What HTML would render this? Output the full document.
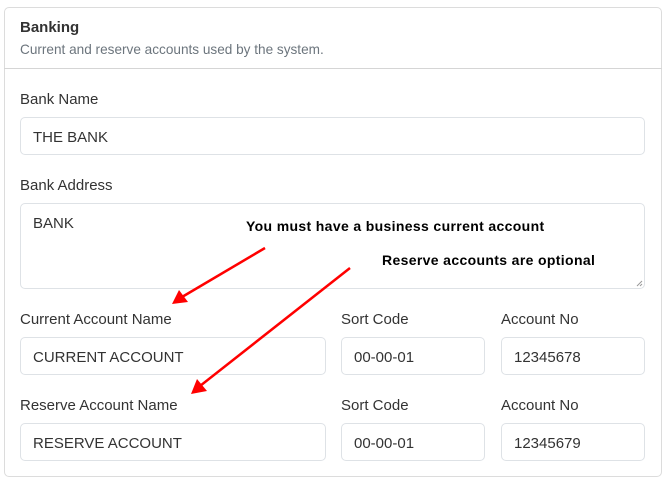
<!DOCTYPE html>
<html><head><style>
body{margin:0;width:667px;height:483px;background:#fff;font-family:"Liberation Sans",sans-serif;position:relative;overflow:hidden;color:#212529}
.card{position:absolute;left:4px;top:7px;width:656px;height:468px;border:1px solid #dcdcdc;border-radius:5px}
.hdr{position:absolute;left:4px;top:7px;width:658px;height:61px;border-bottom:1px solid #d5d5d5}
.t{position:absolute;white-space:nowrap}
.lbl{font-size:15px;color:#333}
.in{position:absolute;border:1px solid #dee2e6;border-radius:5px;box-sizing:border-box;font-size:15px;color:#333;padding-left:12px;line-height:40px}
.note{font-size:14px;font-weight:bold;color:#000;letter-spacing:0.35px}
</style></head><body>
<div class="card"></div><div class="hdr"></div>
<div class="t" style="left:20px;top:19px;font-size:15px;font-weight:600;color:#333">Banking</div>
<div class="t" style="left:20px;top:42px;font-size:13.6px;color:#6c757d">Current and reserve accounts used by the system.</div>
<div class="t lbl" style="left:20px;top:91px">Bank Name</div>
<div class="in" style="left:20px;top:117px;width:625px;height:38px">THE BANK</div>
<div class="t lbl" style="left:20px;top:177px">Bank Address</div>
<div class="in" style="left:20px;top:203px;width:625px;height:86px;line-height:20px;padding-top:10px">BANK</div>
<div class="t note" style="left:246px;top:218px">You must have a business current account</div>
<div class="t note" style="left:382px;top:252px">Reserve accounts are optional</div>
<div class="t lbl" style="left:20px;top:311px">Current Account Name</div>
<div class="t lbl" style="left:341px;top:311px">Sort Code</div>
<div class="t lbl" style="left:501px;top:311px">Account No</div>
<div class="in" style="left:20px;top:337px;width:306px;height:38px">CURRENT ACCOUNT</div>
<div class="in" style="left:341px;top:337px;width:144px;height:38px">00-00-01</div>
<div class="in" style="left:501px;top:337px;width:144px;height:38px">12345678</div>
<div class="t lbl" style="left:20px;top:397px">Reserve Account Name</div>
<div class="t lbl" style="left:341px;top:397px">Sort Code</div>
<div class="t lbl" style="left:501px;top:397px">Account No</div>
<div class="in" style="left:20px;top:423px;width:306px;height:38px">RESERVE ACCOUNT</div>
<div class="in" style="left:341px;top:423px;width:144px;height:38px">00-00-01</div>
<div class="in" style="left:501px;top:423px;width:144px;height:38px">12345679</div>
<svg style="position:absolute;left:0;top:0" width="667" height="483">
<g stroke="#f00" stroke-width="2.5" fill="#f00">
<line x1="265" y1="248" x2="182" y2="297"/>
<polygon points="172,304 179,290 188,302" stroke="none"/>
<line x1="350" y1="268" x2="200" y2="386"/>
<polygon points="191,394 197,379 207,391" stroke="none"/>
</g>
<g stroke="#999" stroke-width="1"><line x1="637" y1="286" x2="642" y2="281"/><line x1="640" y1="286" x2="642" y2="284"/></g>
</svg>
</body></html>
